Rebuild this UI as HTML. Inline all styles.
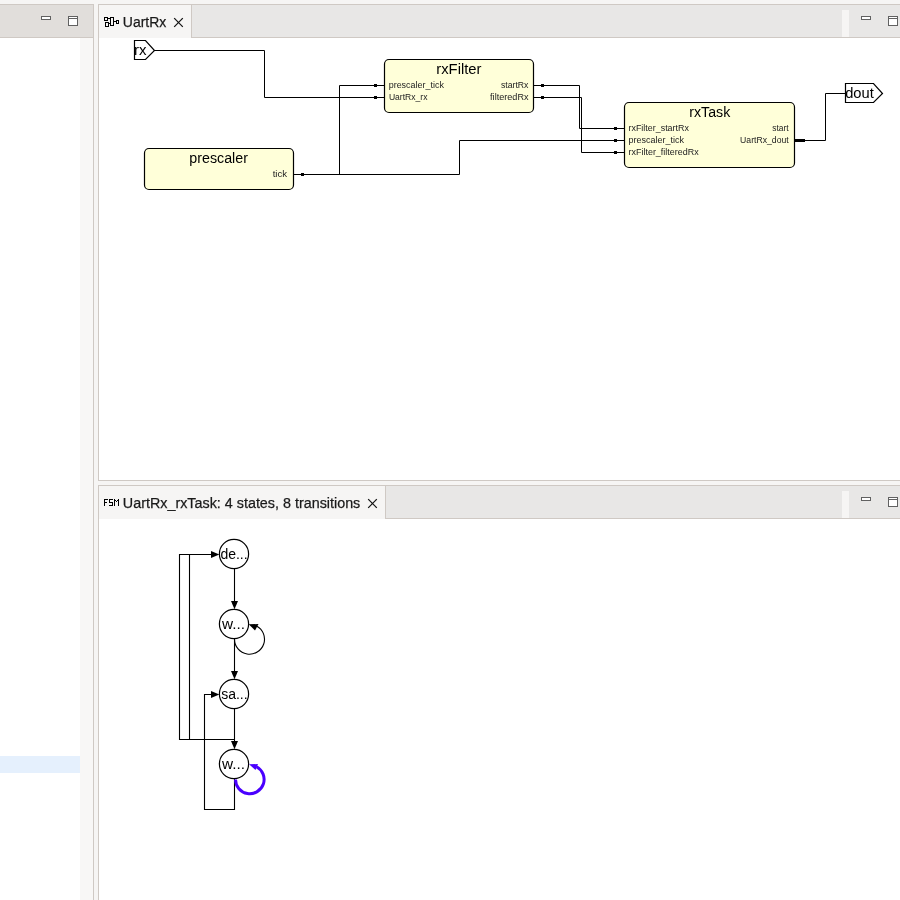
<!DOCTYPE html>
<html><head><meta charset="utf-8">
<style>
html,body{margin:0;padding:0;width:900px;height:900px;overflow:hidden;background:#f6f5f4;font-family:"Liberation Sans",sans-serif;}
svg{position:absolute;left:0;top:0;display:block;will-change:transform;}
</style></head><body>
<svg width="900" height="900" viewBox="0 0 900 900" font-family="Liberation Sans, sans-serif">
<!-- background -->
<rect x="0" y="0" width="900" height="900" fill="#f6f5f4"/>

<!-- LEFT PANEL -->
<rect x="0" y="4" width="94" height="896" fill="#cfc9c4"/>
<rect x="0" y="5" width="93" height="32" fill="#e1dedb"/>
<rect x="0" y="38" width="80" height="862" fill="#ffffff"/>
<rect x="80" y="38" width="13" height="862" fill="#f8f7f6"/>
<rect x="0" y="756" width="80" height="17" fill="#e5f0fd"/>
<g shape-rendering="crispEdges"><rect x="41" y="16" width="10" height="4" fill="#616161"/><rect x="42" y="17" width="8" height="2" fill="#fff"/>
<rect x="68" y="16" width="10" height="10" fill="#616161"/><rect x="69" y="17" width="8" height="1" fill="#fff"/><rect x="69" y="19" width="8" height="6" fill="#fff"/></g>

<!-- UPPER RIGHT PANEL -->
<rect x="98" y="4" width="802" height="477" fill="#cfc9c4"/>
<rect x="99" y="5" width="801" height="32" fill="#e8e7e6"/>
<rect x="99" y="38" width="801" height="442" fill="#ffffff"/>
<!-- tab -->
<rect x="99" y="5" width="92" height="33" fill="#f6f5f4"/>
<rect x="191" y="5" width="1" height="33" fill="#cfc9c4"/>
<rect x="842" y="10" width="7" height="27" fill="#f6f5f4"/>
<g shape-rendering="crispEdges"><rect x="861" y="16" width="10" height="4" fill="#616161"/><rect x="862" y="17" width="8" height="2" fill="#fff"/>
<rect x="888" y="16" width="10" height="10" fill="#616161"/><rect x="889" y="17" width="8" height="1" fill="#fff"/><rect x="889" y="19" width="8" height="6" fill="#fff"/></g>
<!-- diagram icon -->
<path shape-rendering="crispEdges" fill="#000" fill-rule="evenodd" d="M104,17h4v4h-4zM105,18v2h2v-2zM105,22h4v5h-4zM106,23v3h2v-3zM110,17h4v9h-4zM111,18v7h2v-7zM108,18h2v1h-2zM109,23h1v1h-1zM114,21h2v1h-2zM116,20h3v4h-3zM117,21v2h1v-2z"/>
<text x="122.8" y="26.8" font-size="15.3" fill="#1a1a1a" stroke="#1a1a1a" stroke-width="0.25" textLength="43.5" lengthAdjust="spacingAndGlyphs">UartRx</text>
<g stroke="#111" stroke-width="1.2" stroke-linecap="butt">
  <line x1="174.2" y1="18.2" x2="182.8" y2="26.8"/>
  <line x1="182.8" y1="18.2" x2="174.2" y2="26.8"/>
</g>

<!-- LOWER RIGHT PANEL -->
<rect x="98" y="485" width="802" height="415" fill="#cfc9c4"/>
<rect x="99" y="486" width="801" height="32" fill="#e8e7e6"/>
<rect x="99" y="519" width="801" height="381" fill="#ffffff"/>
<rect x="99" y="486" width="286" height="33" fill="#f6f5f4"/>
<rect x="385" y="486" width="1" height="33" fill="#cfc9c4"/>
<rect x="842" y="491" width="7" height="27" fill="#f6f5f4"/>
<g shape-rendering="crispEdges"><rect x="861" y="497" width="10" height="4" fill="#616161"/><rect x="862" y="498" width="8" height="2" fill="#fff"/>
<rect x="888" y="497" width="10" height="10" fill="#616161"/><rect x="889" y="498" width="8" height="1" fill="#fff"/><rect x="889" y="500" width="8" height="6" fill="#fff"/></g>
<path shape-rendering="crispEdges" fill="#000" d="M104,499h1v7h-1zM105,499h3v1h-3zM105,502h2v1h-2zM109,499h4v1h-4zM109,500h1v2h-1zM109,502h4v1h-4zM112,503h1v2h-1zM109,505h4v1h-4zM114,499h1v7h-1zM118,499h1v7h-1zM115,500h1v1h-1zM116,501h1v1h-1zM117,500h1v1h-1z"/>
<text x="122.8" y="507.8" font-size="15.3" fill="#1a1a1a" stroke="#1a1a1a" stroke-width="0.25" textLength="237.5" lengthAdjust="spacingAndGlyphs">UartRx_rxTask: 4 states, 8 transitions</text>
<g stroke="#111" stroke-width="1.2" stroke-linecap="butt">
  <line x1="368.2" y1="499.2" x2="376.8" y2="507.8"/>
  <line x1="376.8" y1="499.2" x2="368.2" y2="507.8"/>
</g>

<!-- ===== TOP DIAGRAM ===== -->
<g fill="none" stroke="#000" stroke-width="1">
  <!-- rx port -->
  <polygon points="134.5,40.5 145.5,40.5 154.5,50.5 145.5,59.5 134.5,59.5" fill="#fff" stroke-width="1.2"/>
  <polyline points="155,50.5 264.5,50.5 264.5,97.5 384,97.5"/>
  <polyline points="294,174.5 459.5,174.5 459.5,140.5 624,140.5"/>
  <polyline points="339.5,174.5 339.5,85.5 384,85.5"/>
  <polyline points="534,85.5 579.5,85.5 579.5,128.5 624,128.5"/>
  <polyline points="534,97.5 581.5,97.5 581.5,152.5 624,152.5"/>
  <polyline points="805,140.5 825.5,140.5 825.5,93.5 845.5,93.5"/>
  <!-- dout port -->
  <polygon points="845.5,83.5 873.5,83.5 882.5,93.5 873.5,102.5 845.5,102.5" fill="#fff" stroke-width="1.2"/>
</g>
<!-- boxes -->
<g fill="#ffffd9" stroke="#000" stroke-width="1.2">
  <rect x="144.5" y="148.5" width="149" height="41" rx="4.5"/>
  <rect x="384.5" y="59.5" width="149" height="53" rx="4.5"/>
  <rect x="624.5" y="102.5" width="170" height="65" rx="4.5"/>
</g>
<!-- port markers -->
<g fill="#000">
  <rect x="374" y="84" width="3" height="3"/>
  <rect x="374" y="96" width="3" height="3"/>
  <rect x="541" y="84" width="3" height="3"/>
  <rect x="541" y="96" width="3" height="3"/>
  <rect x="614" y="127" width="3" height="3"/>
  <rect x="614" y="139" width="3" height="3"/>
  <rect x="614" y="151" width="3" height="3"/>
  <rect x="301" y="173" width="3" height="3"/>
  <rect x="795" y="139" width="10" height="3"/>
</g>
<g fill="#000">
  <text x="134" y="55" font-size="15">rx</text>
  <text x="845.2" y="98" font-size="15" textLength="28.6" lengthAdjust="spacingAndGlyphs">dout</text>
</g>
<!--LABELS-->
<text x="272.70" y="177" font-size="9" fill="#222" textLength="14.40" lengthAdjust="spacingAndGlyphs">tick</text>
<text x="388.70" y="88" font-size="9" fill="#222" textLength="55.20" lengthAdjust="spacingAndGlyphs">prescaler_tick</text>
<text x="388.90" y="100" font-size="9" fill="#222" textLength="38.60" lengthAdjust="spacingAndGlyphs">UartRx_rx</text>
<text x="500.90" y="88" font-size="9" fill="#222" textLength="27.60" lengthAdjust="spacingAndGlyphs">startRx</text>
<text x="490.10" y="100" font-size="9" fill="#222" textLength="38.40" lengthAdjust="spacingAndGlyphs">filteredRx</text>
<text x="628.50" y="131" font-size="9" fill="#222" textLength="60.40" lengthAdjust="spacingAndGlyphs">rxFilter_startRx</text>
<text x="628.50" y="143" font-size="9" fill="#222" textLength="55.40" lengthAdjust="spacingAndGlyphs">prescaler_tick</text>
<text x="628.50" y="155" font-size="9" fill="#222" textLength="70.20" lengthAdjust="spacingAndGlyphs">rxFilter_filteredRx</text>
<text x="772.30" y="131" font-size="9" fill="#222" textLength="16.40" lengthAdjust="spacingAndGlyphs">start</text>
<text x="740.10" y="143" font-size="9" fill="#222" textLength="48.60" lengthAdjust="spacingAndGlyphs">UartRx_dout</text>
<text x="436.30" y="74" font-size="14" fill="#000" textLength="45.20" lengthAdjust="spacingAndGlyphs">rxFilter</text>
<text x="689.30" y="117" font-size="14" fill="#000" textLength="41.00" lengthAdjust="spacingAndGlyphs">rxTask</text>
<text x="189.30" y="163" font-size="14" fill="#000" textLength="58.60" lengthAdjust="spacingAndGlyphs">prescaler</text>
<!--/LABELS-->

<!-- ===== FSM DIAGRAM ===== -->
<g fill="none" stroke="#000" stroke-width="1.1">
  <polyline points="211,554.5 179.5,554.5 179.5,739.5 234.5,739.5"/>
  <polyline points="189.5,554.5 189.5,739.5"/>
  <line x1="234.5" y1="568.5" x2="234.5" y2="602"/>
  <line x1="234.5" y1="638.5" x2="234.5" y2="672"/>
  <line x1="234.5" y1="708.5" x2="234.5" y2="742"/>
  <polyline points="211,694.5 204.5,694.5 204.5,809.5 234.5,809.5 234.5,778.5"/>
  <path d="M234.50,639.20 A15,15 0 1 0 256.54,625.96"/>
</g>
<g fill="#fff" stroke="#000" stroke-width="1.2">
  <circle cx="234" cy="554" r="14.6"/>
  <circle cx="234" cy="624" r="14.6"/>
  <circle cx="234" cy="694" r="14.6"/>
  <circle cx="234" cy="764" r="14.6"/>
</g>
<g fill="#000">
  <polygon points="211,551 219.3,554.5 211,558"/>
  <polygon points="231,601 238,601 234.5,609.2"/>
  <polygon points="231,671 238,671 234.5,679.2"/>
  <polygon points="231,741 238,741 234.5,749.2"/>
  <polygon points="211,691 219.3,694.5 211,698"/>
  <polygon points="248.7,624.3 258.5,624 255,630.5"/>
</g>
<path d="M235.50,779.40 A14.3,14.3 0 1 0 256.51,766.77" fill="none" stroke="#4a00ff" stroke-width="3"/>
<polygon points="249,764.3 258,764 255.5,770" fill="#4a00ff"/>
<g fill="#000" font-size="14">
  <text x="220.4" y="558.6">de...</text>
  <text x="222" y="629" textLength="23" lengthAdjust="spacingAndGlyphs">w...</text>
  <text x="221.2" y="698.6">sa...</text>
  <text x="222" y="769" textLength="23" lengthAdjust="spacingAndGlyphs">w...</text>
</g>
</svg>
</body></html>
